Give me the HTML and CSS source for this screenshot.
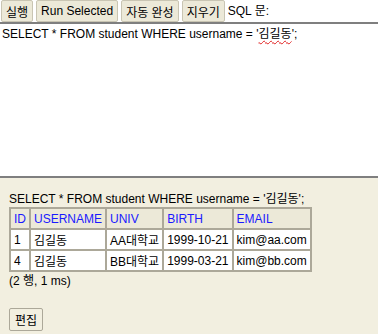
FILE: index.html
```html
<!DOCTYPE html>
<html>
<head>
    <title>H2 Console</title>
    <link rel="stylesheet" href="styles.css">
</head>
<body>
    <div class="query-frame">
        <div class="toolbar">
            <button class="tool-button">실행</button>
            <button class="tool-button">Run Selected</button>
            <button class="tool-button">자동 완성</button>
            <button class="tool-button">지우기</button>
            <span class="toolbar-label">SQL 문:</span>
        </div>
        <div class="sql-editor">SELECT * FROM student WHERE username = '<span class="misspelled">김길동</span>';</div>
    </div>

    <div class="result-frame">
        <div class="result-sql">SELECT * FROM student WHERE username = '김길동';</div>
        <table class="result-table">
            <tr>
                <th>ID</th>
                <th>USERNAME</th>
                <th>UNIV</th>
                <th>BIRTH</th>
                <th>EMAIL</th>
            </tr>
            <tr>
                <td>1</td>
                <td>김길동</td>
                <td>AA대학교</td>
                <td>1999-10-21</td>
                <td>kim@aa.com</td>
            </tr>
            <tr>
                <td>4</td>
                <td>김길동</td>
                <td>BB대학교</td>
                <td>1999-03-21</td>
                <td>kim@bb.com</td>
            </tr>
        </table>
        <div class="result-info">(2 행, 1 ms)</div>
        <button class="edit-button">편집</button>
    </div>
</body>
</html>
```

FILE: styles.css
```css
* {
    box-sizing: border-box;
}

body {
    margin: 0;
    padding: 0;
    width: 378px;
    height: 334px;
    overflow: hidden;
    font-family: "Liberation Sans", Arial, "Noto Sans CJK KR", sans-serif;
    font-size: 12px;
    color: #000;
    display: flex;
    flex-direction: column;
}

.query-frame {
    height: 178px;
    background-color: #fff;
    border-bottom: 2px solid #7f7f7f;
}

.toolbar {
    display: flex;
    align-items: flex-start;
    gap: 3px;
    height: 24px;
    padding-left: 1px;
    border-bottom: 2px solid #7f7f7f;
}

.tool-button {
    height: 22px;
    padding: 0 4px;
    margin: 0;
    font-family: inherit;
    font-size: 12px;
    color: #000;
    background-color: #ece9d8;
    border: 1px solid #c9c5b3;
    border-radius: 2px;
}

.toolbar-label {
    line-height: 22px;
}

.sql-editor {
    padding: 2px 2px;
    line-height: 16px;
}

.misspelled {
    text-decoration: underline wavy #e02020;
    text-decoration-thickness: 1px;
    text-underline-offset: 2px;
}

.result-frame {
    flex: 1;
    background-color: #f2efe0;
    padding: 13px 9px 0;
}

.result-sql {
    line-height: 16px;
    margin-bottom: 0;
}

.result-table {
    border-collapse: collapse;
    border: 2px solid #aca899;
}

.result-table th,
.result-table td {
    border: 2px solid #aca899;
    padding: 0 3px;
    height: 21px;
    text-align: left;
    font-weight: normal;
    white-space: nowrap;
}

.result-table th {
    background-color: #ece9d8;
    color: #1a1aff;
}

.result-table td {
    background-color: #fff;
}

.result-info {
    margin-top: 1px;
    line-height: 16px;
}

.edit-button {
    margin-top: 19px;
    height: 23px;
    padding: 0 5px;
    font-family: inherit;
    font-size: 12px;
    color: #000;
    background-color: #f2efe0;
    border: 1px solid #aca899;
    border-radius: 2px;
}
```
